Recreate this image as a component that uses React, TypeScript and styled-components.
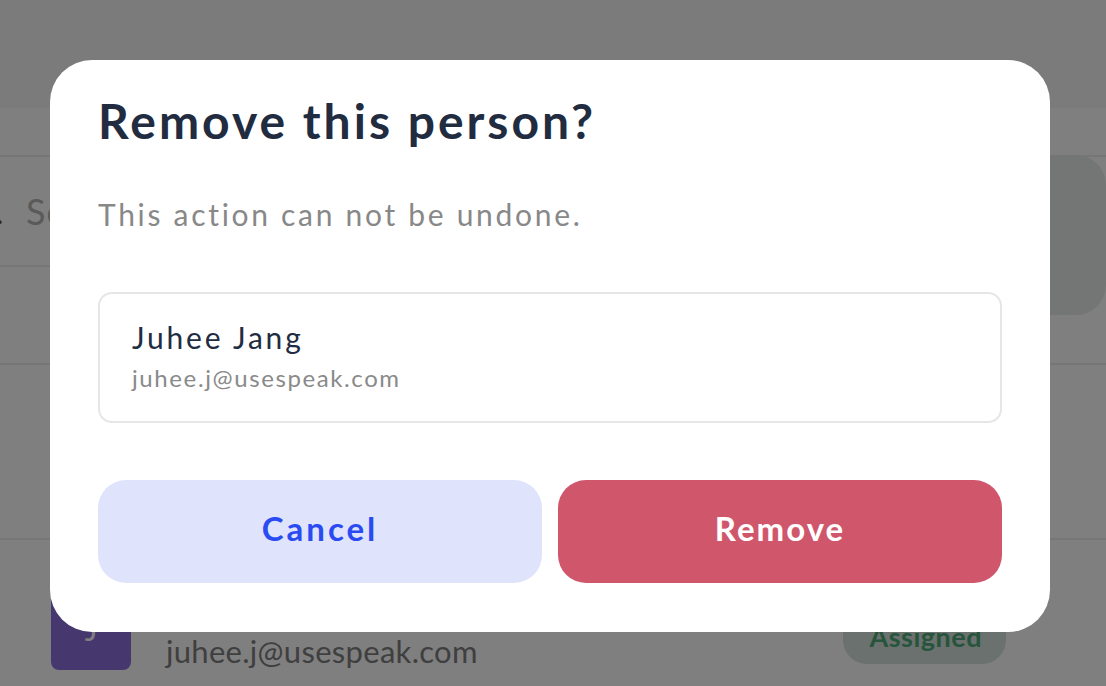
import React from "react";
import styled, { createGlobalStyle } from "styled-components";
import { Search } from "lucide-react";

const GlobalStyle = createGlobalStyle`
  html, body {
    margin: 0;
    padding: 0;
    background: #ffffff;
    font-family: "Lato", "Liberation Sans", sans-serif;
    overflow: hidden;
  }
  * {
    box-sizing: border-box;
  }
`;

const Page = styled.div`
  width: 1106px;
  height: 686px;
  overflow: hidden;
  background: #ffffff;
`;

const TopBar = styled.div`
  height: 108px;
  background: #f6f6f6;
`;

const TabStrip = styled.div`
  height: 49px;
  border-bottom: 2px solid #ececec;
`;

const Toolbar = styled.div`
  display: flex;
  align-items: flex-start;
  height: 208px;
  border-bottom: 2px solid #ececec;
  margin-left: -26px;
`;

const SearchBox = styled.div`
  flex: 1;
  height: 110px;
  display: flex;
  align-items: center;
  gap: 22px;
  border-bottom: 2px solid #ececec;
  color: #b4b4b4;
  font-size: 36px;
  letter-spacing: 1px;
`;

const ToolButton = styled.div`
  width: 200px;
  height: 160px;
  margin-top: -2px;
  border-radius: 30px;
  background: #e8ecea;
`;

const EmptyRow = styled.div`
  height: 175px;
  border-bottom: 2px solid #ececec;
`;

const PersonRow = styled.div`
  display: flex;
  align-items: flex-end;
  padding: 0 100px 14px 51px;
  height: 144px;
`;

const Avatar = styled.div`
  width: 80px;
  height: 82px;
  border-radius: 8px;
  background: #8c70de;
  color: #ffffff;
  font-size: 30px;
  display: flex;
  align-items: center;
  justify-content: center;
`;

const PersonInfo = styled.div`
  display: flex;
  flex-direction: column;
  margin-left: 35px;
  gap: 4px;
`;

const NameLine = styled.div`
  display: flex;
  align-items: center;
  gap: 30px;
  color: #222c41;
  font-size: 30px;
  height: 40px;
`;

const RolePill = styled.div`
  width: 136px;
  height: 40px;
  border-radius: 20px;
  background: #dce0ff;
  margin-left: 60px;
`;

const PersonEmail = styled.div`
  color: #7e7e7e;
  font-size: 31px;
  letter-spacing: 0.3px;
`;

const StatusPill = styled.div`
  margin-left: auto;
  margin-bottom: 6px;
  padding: 0 24px 0 26px;
  height: 56px;
  border-radius: 24px;
  background: #d6e2dc;
  color: #4fa97a;
  font-weight: 700;
  font-size: 27px;
  letter-spacing: 0.5px;
  display: flex;
  align-items: center;
`;

const Overlay = styled.div`
  position: fixed;
  inset: 0;
  background: rgba(0, 0, 0, 0.5);
  display: flex;
  align-items: flex-start;
  padding: 60px 0 0 50px;
`;

const Modal = styled.div`
  width: 1000px;
  background: #ffffff;
  border-radius: 42px;
  padding: 31px 48px 49px;
  display: flex;
  flex-direction: column;
`;

const Title = styled.h2`
  margin: 0;
  font-size: 48px;
  line-height: 60px;
  font-weight: 700;
  letter-spacing: 3px;
  color: #222c41;
`;

const Subtitle = styled.p`
  margin: 43px 0 0;
  font-size: 30px;
  line-height: 40px;
  letter-spacing: 2.7px;
  color: #888888;
`;

const PersonCard = styled.div`
  margin-top: 58px;
  border: 2px solid #e6e6e6;
  border-radius: 14px;
  padding: 24px 32px 27px;
  display: flex;
  flex-direction: column;
  gap: 6px;
`;

const CardName = styled.div`
  font-size: 30px;
  line-height: 38px;
  letter-spacing: 2.8px;
  color: #222c41;
`;

const CardEmail = styled.div`
  font-size: 24px;
  line-height: 32px;
  letter-spacing: 1.6px;
  color: #8a8a8a;
`;

const Actions = styled.div`
  margin-top: 57px;
  display: grid;
  grid-template-columns: 1fr 1fr;
  gap: 16px;
`;

const ActionButton = styled.button<{ $danger?: boolean }>`
  height: 103px;
  padding: 0 0 7px;
  border: none;
  border-radius: 28px;
  font-family: inherit;
  font-size: 33px;
  font-weight: 700;
  letter-spacing: ${({ $danger }) => ($danger ? "2px" : "3px")};
  cursor: pointer;
  background: ${({ $danger }) => ($danger ? "#d0566c" : "#dfe4fc")};
  color: ${({ $danger }) => ($danger ? "#ffffff" : "#2a4bf2")};
`;

export default function App() {
  return (
    <>
      <GlobalStyle />
      <Page>
        <TopBar />
        <TabStrip />
        <Toolbar>
          <SearchBox>
            <Search size={30} color="#555" strokeWidth={2.5} />
            Search
          </SearchBox>
          <ToolButton />
        </Toolbar>
        <EmptyRow />
        <PersonRow>
          <Avatar>J</Avatar>
          <PersonInfo>
            <NameLine>
              Juhee Jang
              <RolePill />
            </NameLine>
            <PersonEmail>juhee.j@usespeak.com</PersonEmail>
          </PersonInfo>
          <StatusPill>Assigned</StatusPill>
        </PersonRow>
      </Page>
      <Overlay>
        <Modal>
          <Title>Remove this person?</Title>
          <Subtitle>This action can not be undone.</Subtitle>
          <PersonCard>
            <CardName>Juhee Jang</CardName>
            <CardEmail>juhee.j@usespeak.com</CardEmail>
          </PersonCard>
          <Actions>
            <ActionButton>Cancel</ActionButton>
            <ActionButton $danger>Remove</ActionButton>
          </Actions>
        </Modal>
      </Overlay>
    </>
  );
}
